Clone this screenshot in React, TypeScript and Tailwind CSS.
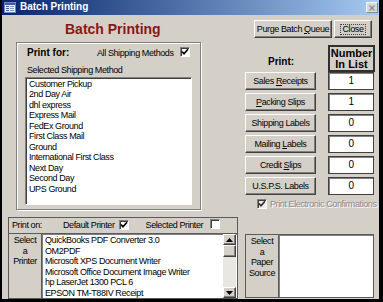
import React from 'react';

const shippingMethods = [
  'Customer Pickup',
  '2nd Day Air',
  'dhl express',
  'Express Mail',
  'FedEx Ground',
  'First Class Mail',
  'Ground',
  'International First Class',
  'Next Day',
  'Second Day',
  'UPS Ground',
];

const printers = [
  'QuickBooks PDF Converter 3.0',
  'OM2PDF',
  'Microsoft XPS Document Writer',
  'Microsoft Office Document Image Writer',
  'hp LaserJet 1300 PCL 6',
  'EPSON TM-T88IV Receipt',
];

function CheckBox({ checked, disabled }: { checked?: boolean; disabled?: boolean }) {
  return (
    <span
      className={`inline-flex h-[10px] w-[10px] shrink-0 items-center justify-center border border-t-[#808080] border-l-[#808080] border-r-white border-b-white shadow-[inset_1px_1px_0_#404040] ${
        disabled ? 'bg-[#ecebe8]' : 'bg-white'
      }`}
    >
      {checked && (
        <svg width="8" height="8" viewBox="0 0 8 8">
          <path d="M1 3.5 L3 5.7 L7 1.3" stroke={disabled ? '#303030' : '#000'} strokeWidth="1.7" fill="none" />
        </svg>
      )}
    </span>
  );
}

function WinButton({ children, className = '' }: { children?: React.ReactNode; className?: string }) {
  return (
    <div
      className={`flex items-center justify-center border border-t-white border-l-white border-r-[#404040] border-b-[#404040] bg-[#d4d0c8] shadow-[inset_-1px_-1px_0_#808080] ${className}`}
    >
      {children}
    </div>
  );
}

function PrintRow({ label, count }: { label: React.ReactNode; count: number }) {
  return (
    <div className="flex h-[18px] items-center">
      <WinButton className="h-[18px] w-[71px]">
        <span className="whitespace-pre">{label}</span>
      </WinButton>
      <div className="mr-[1px] ml-auto flex h-[18px] w-[46px] items-center justify-center border border-[#404040] bg-white text-[10px] shadow-[inset_1px_1px_0_#808080]">
        {count}
      </div>
    </div>
  );
}

function ScrollArrow({ up }: { up?: boolean }) {
  return (
    <WinButton className="h-[11px] w-[13px]">
      <svg width="7" height="4" viewBox="0 0 7 4">
        <path d={up ? 'M0 4 L3.5 0 L7 4 Z' : 'M0 0 L3.5 4 L7 0 Z'} fill="#000" />
      </svg>
    </WinButton>
  );
}

export default function App() {
  return (
    <div className="h-[302px] w-[383px] overflow-hidden bg-black font-['Liberation_Sans',Arial,sans-serif] text-[9px] leading-[10.5px] tracking-[-0.4px] text-black">
      <div className="ml-[2px] flex h-[299px] w-[377px] flex-col bg-[#d4d0c8]">
        {/* title bar */}
        <div className="flex h-[15px] items-center bg-linear-to-r from-[#0a246a] to-[#a6caf0]">
          <svg className="ml-[2px]" width="12" height="11" viewBox="0 0 12 11">
            <rect x="0.5" y="0.5" width="11" height="10" fill="#e8eef8" stroke="#6d88b8" />
            <rect x="1" y="1" width="10" height="2" fill="#3a5fa8" />
            <rect x="2" y="4" width="3" height="1" fill="#3a5fa8" />
            <rect x="6" y="4" width="4" height="1" fill="#7f9ccc" />
            <rect x="2" y="6" width="3" height="1" fill="#3a5fa8" />
            <rect x="6" y="6" width="4" height="1" fill="#7f9ccc" />
            <rect x="2" y="8" width="3" height="1" fill="#3a5fa8" />
            <rect x="6" y="8" width="4" height="1" fill="#7f9ccc" />
          </svg>
          <span className="ml-[4px] text-[10px] font-bold tracking-normal text-white">Batch Printing</span>
          <div className="mr-[1px] ml-auto flex h-[11px] w-[12px] items-center justify-center border border-t-[#f4f4f4] border-l-[#f4f4f4] border-r-[#8a8a8a] border-b-[#8a8a8a] bg-[#d8d8d4]">
            <svg width="6" height="6" viewBox="0 0 6 6">
              <path d="M0.5 0.5 L5.5 5.5 M5.5 0.5 L0.5 5.5" stroke="#8a8a8a" strokeWidth="1.2" />
            </svg>
          </div>
        </div>

        {/* header row */}
        <div className="mt-[5px] flex h-[18px] items-center">
          <span className="ml-[63px] text-[14px] leading-[18px] font-bold tracking-normal text-[#8c1616]">Batch Printing</span>
          <div className="mr-[7px] ml-auto flex gap-[2px]">
            <WinButton className="h-[18px] w-[78px]">
              <span className="whitespace-pre">
                Purge Batch <span className="underline">Q</span>ueue
              </span>
            </WinButton>
            <WinButton className="h-[18px] w-[38px]">
              <span className="border border-dotted border-[#404040] px-[1px] leading-[9px]">Close</span>
            </WinButton>
          </div>
        </div>

        {/* main */}
        <div className="mt-[4px] flex">
          {/* left column */}
          <div className="ml-[6px] flex w-[230px] flex-col">
            <div className="ml-[8px] h-[168px] w-[185px] border border-[#808080] shadow-[inset_1px_1px_0_#ffffff,1px_1px_0_#ffffff]">
              <div className="mt-[4px] flex h-[12px] items-center pl-[10px]">
                <span className="w-[70px] text-[10px] font-bold tracking-normal">Print for:</span>
                <span>All Shipping Methods</span>
                <span className="ml-[6px]">
                  <CheckBox checked />
                </span>
              </div>
              <div className="mt-[6px] pl-[10px]">Selected Shipping Method</div>
              <div className="mt-[1px] ml-[8px] h-[128px] w-[167px] overflow-hidden border border-t-[#808080] border-l-[#808080] border-r-white border-b-white bg-white pt-[1px] pl-[3px] shadow-[inset_1px_1px_0_#404040]">
                {shippingMethods.map((m) => (
                  <div key={m}>{m}</div>
                ))}
              </div>
            </div>

            <div className="mt-[7px] flex h-[82px] w-[230px] flex-col border border-[#5a5a5a]">
              <div className="flex h-[18px] items-center border-b border-[#5a5a5a] pl-[3px]">
                <span className="w-[51px]">Print on:</span>
                <span>Default Printer</span>
                <span className="ml-[4px]">
                  <CheckBox checked />
                </span>
                <span className="ml-[17px]">Selected Printer</span>
                <span className="ml-[7px]">
                  <CheckBox />
                </span>
              </div>
              <div className="flex flex-1">
                <div className="w-[33px] border-r border-[#5a5a5a] pt-[1px] text-center">
                  <div>Select</div>
                  <div>a</div>
                  <div>Printer</div>
                </div>
                <div className="flex flex-1 bg-white shadow-[inset_1px_1px_0_#808080]">
                  <div className="flex-1 overflow-hidden pt-[1px] pl-[3px] whitespace-nowrap">
                    {printers.map((p) => (
                      <div key={p}>{p}</div>
                    ))}
                  </div>
                  <div className="mr-[1px] flex w-[13px] flex-col bg-[#e9e7e2]">
                    <ScrollArrow up />
                    <WinButton className="h-[12px] w-[13px]" />
                    <div className="flex-1" />
                    <ScrollArrow />
                  </div>
                </div>
              </div>
            </div>
          </div>

          {/* right column */}
          <div className="ml-[7px] flex w-[130px] flex-col">
            <div className="flex h-[30px] items-start">
              <span className="mt-[14px] ml-[23px] text-[10px] leading-[12px] font-bold tracking-normal">Print:</span>
              <div className="mt-[3px] ml-auto flex h-[27px] w-[47px] flex-col items-center justify-center border-2 border-[#303030] text-[11px] leading-[11px] font-bold tracking-normal">
                <span>Number</span>
                <span>In List</span>
              </div>
            </div>
            <div className="flex flex-col gap-[3px]">
              <PrintRow
                label={
                  <>
                    Sales <span className="underline">R</span>eceipts
                  </>
                }
                count={1}
              />
              <PrintRow
                label={
                  <>
                    <span className="underline">P</span>acking Slips
                  </>
                }
                count={1}
              />
              <PrintRow label="Shipping Labels" count={0} />
              <PrintRow
                label={
                  <>
                    Mailing <span className="underline">L</span>abels
                  </>
                }
                count={0}
              />
              <PrintRow
                label={
                  <>
                    Credit <span className="underline">S</span>lips
                  </>
                }
                count={0}
              />
              <PrintRow label="U.S.P.S. Labels" count={0} />
            </div>
            <div className="mt-[4px] flex h-[10px] items-center pl-[12px]">
              <CheckBox checked disabled />
              <span className="ml-[3px] whitespace-nowrap text-[#8a8a8a] [text-shadow:1px_1px_0_#ffffff]">
                Print Electronic Confirmations
              </span>
            </div>
            <div className="mt-[25px] flex h-[64px] w-[129px] border border-[#5a5a5a]">
              <div className="w-[33px] border-r border-[#5a5a5a] pt-[1px] text-center">
                <div>Select</div>
                <div>a</div>
                <div>Paper</div>
                <div>Source</div>
              </div>
              <div className="flex-1 bg-white shadow-[inset_1px_1px_0_#808080]" />
            </div>
          </div>
        </div>
      </div>
    </div>
  );
}
